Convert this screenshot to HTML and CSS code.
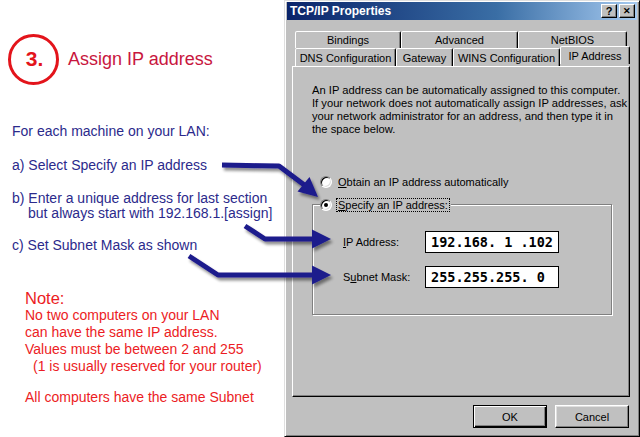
FILE: index.html
```html
<!DOCTYPE html>
<html>
<head>
<meta charset="utf-8">
<title>Assign IP address</title>
<link rel="stylesheet" href="styles.css">
</head>
<body>
<div class="page">
  <section class="guide">
    <div class="step">
      <span class="step-num">3.</span>
      <span class="step-title">Assign IP address</span>
    </div>
    <p class="intro">For each machine on your LAN:</p>
    <p class="item item-a">a) Select Specify an IP address</p>
    <p class="item item-b">b) Enter a unique address for last section<span class="indent">but always start with 192.168.1.[assign]</span></p>
    <p class="item item-c">c) Set Subnet Mask as shown</p>
    <div class="note">
      <p class="note-title">Note:</p>
      <p class="note-line">No two computers on your LAN</p>
      <p class="note-line">can have the same IP address.</p>
      <p class="note-line">Values must be between 2 and 255</p>
      <p class="note-line note-indent">(1 is usually reserved for your router)</p>
      <p class="note-line note-last">All computers have the same Subnet</p>
    </div>
  </section>

  <section class="dialog">
    <div class="titlebar">
      <span class="title">TCP/IP Properties</span>
      <span class="tb-btns">
        <span class="tb-btn tb-help">?</span>
        <span class="tb-btn tb-close">&#x2715;</span>
      </span>
    </div>
    <div class="content">
      <div class="tabs">
        <div class="tab-row">
          <div class="tab w-bind">Bindings</div>
          <div class="tab w-adv">Advanced</div>
          <div class="tab w-net">NetBIOS</div>
        </div>
        <div class="tab-row">
          <div class="tab w-dns">DNS Configuration</div>
          <div class="tab w-gw">Gateway</div>
          <div class="tab w-wins">WINS Configuration</div>
          <div class="tab tab-active w-ip">IP Address</div>
        </div>
      </div>
      <div class="panel">
        <p class="desc">An IP address can be automatically assigned to this computer.<br>If your network does not automatically assign IP addresses, ask<br>your network administrator for an address, and then type it in<br>the space below.</p>
        <div class="radio-row">
          <span class="radio"></span>
          <span class="radio-label"><u>O</u>btain an IP address automatically</span>
        </div>
        <fieldset class="group">
          <legend class="group-legend">
            <span class="radio checked"></span>
            <span class="radio-label focus"><u>S</u>pecify an IP address:</span>
          </legend>
          <div class="field field-ip">
            <span class="field-label"><u>I</u>P Address:</span>
            <span class="ipbox">192.168.&nbsp;1&nbsp;.102</span>
          </div>
          <div class="field field-mask">
            <span class="field-label">S<u>u</u>bnet Mask:</span>
            <span class="ipbox">255.255.255.&nbsp;0</span>
          </div>
        </fieldset>
      </div>
      <div class="buttons">
        <span class="btn btn-default">OK</span>
        <span class="btn">Cancel</span>
      </div>
    </div>
  </section>

  <svg class="arrows" width="640" height="437" viewBox="0 0 640 437">
    <defs>
      <filter id="sh" x="-20%" y="-20%" width="140%" height="140%">
        <feGaussianBlur in="SourceAlpha" stdDeviation="1.6"/>
        <feOffset dx="2" dy="2.5" result="b"/>
        <feComponentTransfer><feFuncA type="linear" slope="0.45"/></feComponentTransfer>
        <feMerge><feMergeNode/><feMergeNode in="SourceGraphic"/></feMerge>
      </filter>
    </defs>
    <g filter="url(#sh)" fill="#1e1a8c" stroke="#1e1a8c">
      <polyline points="222,165 279,166 307,187" fill="none" stroke-width="5" stroke-linejoin="round"/>
      <polygon points="318,197 297.5,191.5 309.5,177" stroke="none"/>
      <polyline points="245,226 265,239 314,239" fill="none" stroke-width="5" stroke-linejoin="round"/>
      <polygon points="331,239 312,229.5 312,248.5" stroke="none"/>
      <polyline points="189,256 218,275 314,275" fill="none" stroke-width="5" stroke-linejoin="round"/>
      <polygon points="331,275 312,265.5 312,284.5" stroke="none"/>
    </g>
  </svg>
</div>
</body>
</html>
```

FILE: styles.css
```css
* { box-sizing: border-box; }
html, body { margin: 0; padding: 0; }
body { background: #fff; width: 640px; height: 437px; overflow: hidden; }

.page {
  position: relative;
  display: flex;
  width: 640px;
  height: 437px;
  font-family: "Liberation Sans", Arial, sans-serif;
}

/* ---------- left guide ---------- */
.guide {
  width: 284px;
  flex: none;
  display: flex;
  flex-direction: column;
}

.step {
  display: flex;
  align-items: center;
  margin-top: 34px;
  padding-left: 8px;
  height: 50px;
}
.step-num {
  width: 51px;
  height: 51px;
  border: 3px solid #e3141b;
  border-radius: 50%;
  display: flex;
  align-items: center;
  justify-content: center;
  color: #e3141b;
  font-size: 21px;
  font-weight: bold;
  padding-left: 2px;
  flex: none;
}
.step-title {
  margin-left: 9px;
  color: #c8163e;
  font-size: 18px;
}

.intro, .item {
  margin: 0;
  color: #2b2a8c;
  font-size: 14px;
  line-height: 15px;
  padding-left: 12px;
}
.intro { margin-top: 40px; }
.item-a { margin-top: 19px; }
.item-b { margin-top: 18px; }
.item-c { margin-top: 17px; }
.indent { display: block; padding-left: 16px; }

.note {
  margin-top: 36px;
  padding-left: 25px;
  color: #ec1c24;
}
.note-title { margin: 0; font-size: 16.5px; line-height: 18px; }
.note-line { margin: 0; font-size: 14px; line-height: 17px; }
.note-indent { padding-left: 8px; }
.note-line.note-last { margin-top: 14px; }

/* ---------- dialog ---------- */
.dialog {
  width: 356px;
  height: 437px;
  flex: none;
  background: #c0c0c0;
  border: 1px solid;
  border-color: #dfdfdf #000 #000 #dfdfdf;
  box-shadow: inset 1px 1px #fff, inset -1px -1px #808080;
  padding: 1px 2px;
  font-family: "Liberation Sans", Arial, sans-serif;
  font-size: 11px;
  color: #000;
}

.titlebar {
  height: 18px;
  background: linear-gradient(to right, #0a246a 0%, #3a6ea5 60%, #a6caf0 100%);
  display: flex;
  align-items: center;
  justify-content: space-between;
  padding: 0 2px 0 3px;
}
.title {
  color: #fff;
  font-weight: bold;
  font-size: 12px;
}
.tb-btns { display: flex; gap: 2px; }
.tb-btn {
  width: 16px;
  height: 14px;
  background: #c0c0c0;
  border: 1px solid;
  border-color: #fff #000 #000 #fff;
  box-shadow: inset -1px -1px #808080;
  display: flex;
  align-items: center;
  justify-content: center;
  font-weight: bold;
  font-size: 11px;
  line-height: 1;
  color: #000;
}
.tb-close { font-size: 9px; }

.content { padding: 0 7px 0 5px; }

.tabs { margin-top: 11px; padding-left: 3px; }
.tab-row { display: flex; }
.tab {
  height: 17px;
  border: 1px solid;
  border-bottom: none;
  border-color: #fff #000 transparent #fff;
  box-shadow: inset -1px 0 #808080;
  border-radius: 2px 2px 0 0;
  display: flex;
  align-items: center;
  justify-content: center;
  white-space: nowrap;
  background: #c0c0c0;
}
.tab-row + .tab-row .tab { height: 18px; }
.w-bind { width: 106px; }
.w-adv { width: 117px; }
.w-net { width: 109px; }
.w-dns { width: 101px; }
.w-gw { width: 57px; }
.w-wins { width: 107px; }
.tab-row .tab-active {
  width: 70px;
  height: 22px;
  margin-top: -2px;
  margin-bottom: -2px;
  position: relative;
  z-index: 1;
  align-items: flex-start;
  padding-top: 3px;
}

.panel {
  height: 331px;
  border: 1px solid;
  border-color: #fff #000 #000 #fff;
  box-shadow: inset -1px -1px #808080;
  padding: 17px 0 0 19px;
}
.desc {
  margin: 0;
  line-height: 13px;
  font-size: 11.2px;
  white-space: nowrap;
}

.radio-row {
  display: flex;
  align-items: center;
  height: 13px;
  margin-top: 39px;
  padding-left: 8px;
}
.radio {
  width: 12px;
  height: 12px;
  border-radius: 50%;
  background: #fff;
  border: 1px solid;
  border-color: #808080 #fff #fff #808080;
  box-shadow: inset 1px 1px #000, inset -1px -1px #dfdfdf;
  flex: none;
  display: flex;
  align-items: center;
  justify-content: center;
}
.radio.checked::after {
  content: "";
  width: 4px;
  height: 4px;
  border-radius: 50%;
  background: #000;
}
.radio-label { margin-left: 6px; }
.radio-label.focus {
  outline: 1px dotted #000;
  outline-offset: 0;
  padding: 0 1px;
  margin-left: 5px;
}

.group {
  width: 300px;
  height: 117px;
  margin: 10px 0 0 0;
  padding: 0;
  border: 1px solid #808080;
  box-shadow: inset 1px 1px #fff, 1px 1px #fff;
}
.group-legend {
  display: flex;
  align-items: center;
  height: 13px;
  padding: 0 2px 0 0;
  margin-left: 7px;
  background: #c0c0c0;
}

.field {
  display: flex;
  align-items: center;
  padding-left: 30px;
}
.field-ip { margin-top: 20px; }
.field-mask { margin-top: 13px; }
.field-label { width: 82px; }
.ipbox {
  width: 134px;
  height: 22px;
  background: #fff;
  border: 1px solid #000;
  font-family: "DejaVu Sans Mono", "Liberation Mono", monospace;
  font-weight: bold;
  font-size: 13.5px;
  display: flex;
  align-items: center;
  padding-left: 5px;
  white-space: pre;
}

.buttons {
  display: flex;
  justify-content: flex-end;
  gap: 8px;
  margin-top: 8px;
  padding-right: 1px;
}
.btn {
  width: 74px;
  height: 23px;
  background: #c0c0c0;
  border: 1px solid;
  border-color: #fff #000 #000 #fff;
  box-shadow: inset -1px -1px #808080, inset 1px 1px #dfdfdf;
  display: flex;
  align-items: center;
  justify-content: center;
}
.btn-default {
  border: 1px solid #000;
  box-shadow: inset 1px 1px #fff, inset -1px -1px #000, inset -2px -2px #808080;
}

/* ---------- arrows overlay ---------- */
.arrows {
  position: absolute;
  left: 0;
  top: 0;
  pointer-events: none;
}
```
